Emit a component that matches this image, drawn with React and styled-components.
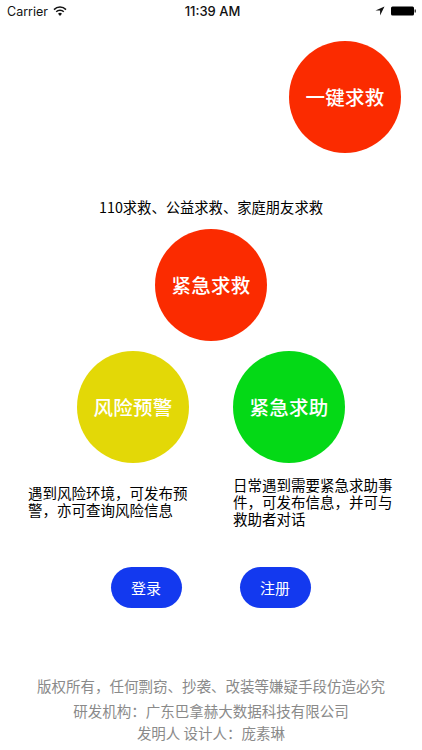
import React from "react";
import styled, { createGlobalStyle } from "styled-components";

const Global = createGlobalStyle`
  html, body { margin: 0; padding: 0; background: #fff; }
  body { font-family: "Noto Sans CJK SC", "Liberation Sans", sans-serif; }
`;
const Screen = styled.div`
  width: 422px; height: 750px; overflow: hidden; background: #fff; color: #000;
  display: flex; flex-direction: column;
`;
const StatusBar = styled.div`
  height: 22px; padding: 0 6px 0 7px; display: grid; grid-template-columns: 1fr auto 1fr; align-items: center;
  font: 400 13px "Inter", "Liberation Sans", sans-serif; color: #111;
`;
const StatusLeft = styled.div`display: flex; align-items: center; gap: 5px; font-size: 12.5px;`;
const StatusTime = styled.div`padding-left: 2px; font-weight: 500;`;
const StatusRight = styled.div`display: flex; align-items: center; justify-content: flex-end; gap: 6px;`;
const Circle = styled.div`
  width: 112px; height: 112px; border-radius: 50%;
  background: ${p => p.$color}; color: #fff; font-size: 19.5px; font-weight: 500; letter-spacing: 0.2px;
  display: flex; align-items: center; justify-content: center; flex: none;
  padding-bottom: 2px; box-sizing: border-box;
`;
const TopRow = styled.div`display: flex; justify-content: flex-end; padding: 19px 21px 0 0;`;
const Caption = styled.div`margin-top: 43px; text-align: center; font-size: 14.3px; line-height: 22px;`;
const CenterRow = styled.div`display: flex; justify-content: center; margin-top: 11px;`;
const PairRow = styled.div`display: flex; padding: 10px 0 0 77px; gap: 44px;`;
const Descs = styled.div`display: flex; align-items: flex-start; padding: 13px 0 0 28px;`;
const Desc = styled.div`
  width: ${p => p.$w}px; margin-left: ${p => p.$ml || 0}px; margin-top: ${p => p.$mt || 0}px;
  font-size: 14.5px; line-height: 17px;
`;
const Buttons = styled.div`display: flex; margin-top: 40px; padding-left: 110.5px; gap: 58px;`;
const Btn = styled.button`
  width: 71px; height: 41px; border: 0; border-radius: 21px; background: #1339ef; color: #fff;
  font: 400 15px "Noto Sans CJK SC", sans-serif; padding: 0;
`;
const Footer = styled.div`
  margin-top: auto; padding-bottom: 6px; text-align: center; color: #8a8a8a; font-size: 14.5px; line-height: 22px;
`;
const FooterLine = styled.div`margin-bottom: ${p => p.$gap || 0}px;`;

export default function App() {
  return (
    <Screen>
      <Global />
      <StatusBar>
        <StatusLeft>
          Carrier
          <svg width="14" height="10" viewBox="0 0 14 10">
            <path d="M1 3.6a8.5 8.5 0 0 1 12 0" fill="none" stroke="#111" strokeWidth="1.5" />
            <path d="M3.2 5.8a5.4 5.4 0 0 1 7.6 0" fill="none" stroke="#111" strokeWidth="1.5" />
            <path d="M5 7.8a2.8 2.8 0 0 1 4 0L7 10z" fill="#111" />
          </svg>
        </StatusLeft>
        <StatusTime>11:39 AM</StatusTime>
        <StatusRight>
          <svg width="10" height="10" viewBox="0 0 10 10"><path d="M9.5.5 .5 4.6h4.6v4.9z" fill="#111" /></svg>
          <svg width="25" height="10" viewBox="0 0 25 10">
            <rect x="0" y="0.5" width="23" height="9" rx="1.5" fill="#000" />
            <rect x="23.5" y="3.5" width="1.5" height="3" fill="#444" />
          </svg>
        </StatusRight>
      </StatusBar>
      <TopRow><Circle $color="#fb2b00">一键求救</Circle></TopRow>
      <Caption>110求救、公益求救、家庭朋友求救</Caption>
      <CenterRow><Circle $color="#fb2b00">紧急求救</Circle></CenterRow>
      <PairRow>
        <Circle $color="#e3d807">风险预警</Circle>
        <Circle $color="#04d916">紧急求助</Circle>
      </PairRow>
      <Descs>
        <Desc $w={170} $mt={8}>遇到风险环境，可发布预警，亦可查询风险信息</Desc>
        <Desc $w={164} $ml={35}>日常遇到需要紧急求助事件，可发布信息，并可与救助者对话</Desc>
      </Descs>
      <Buttons>
        <Btn>登录</Btn>
        <Btn>注册</Btn>
      </Buttons>
      <Footer>
        <FooterLine $gap={3}>版权所有，任何剽窃、抄袭、改装等嫌疑手段仿造必究</FooterLine>
        <FooterLine>研发机构：广东巴拿赫大数据科技有限公司</FooterLine>
        <FooterLine>发明人 设计人：庞素琳</FooterLine>
      </Footer>
    </Screen>
  );
}
